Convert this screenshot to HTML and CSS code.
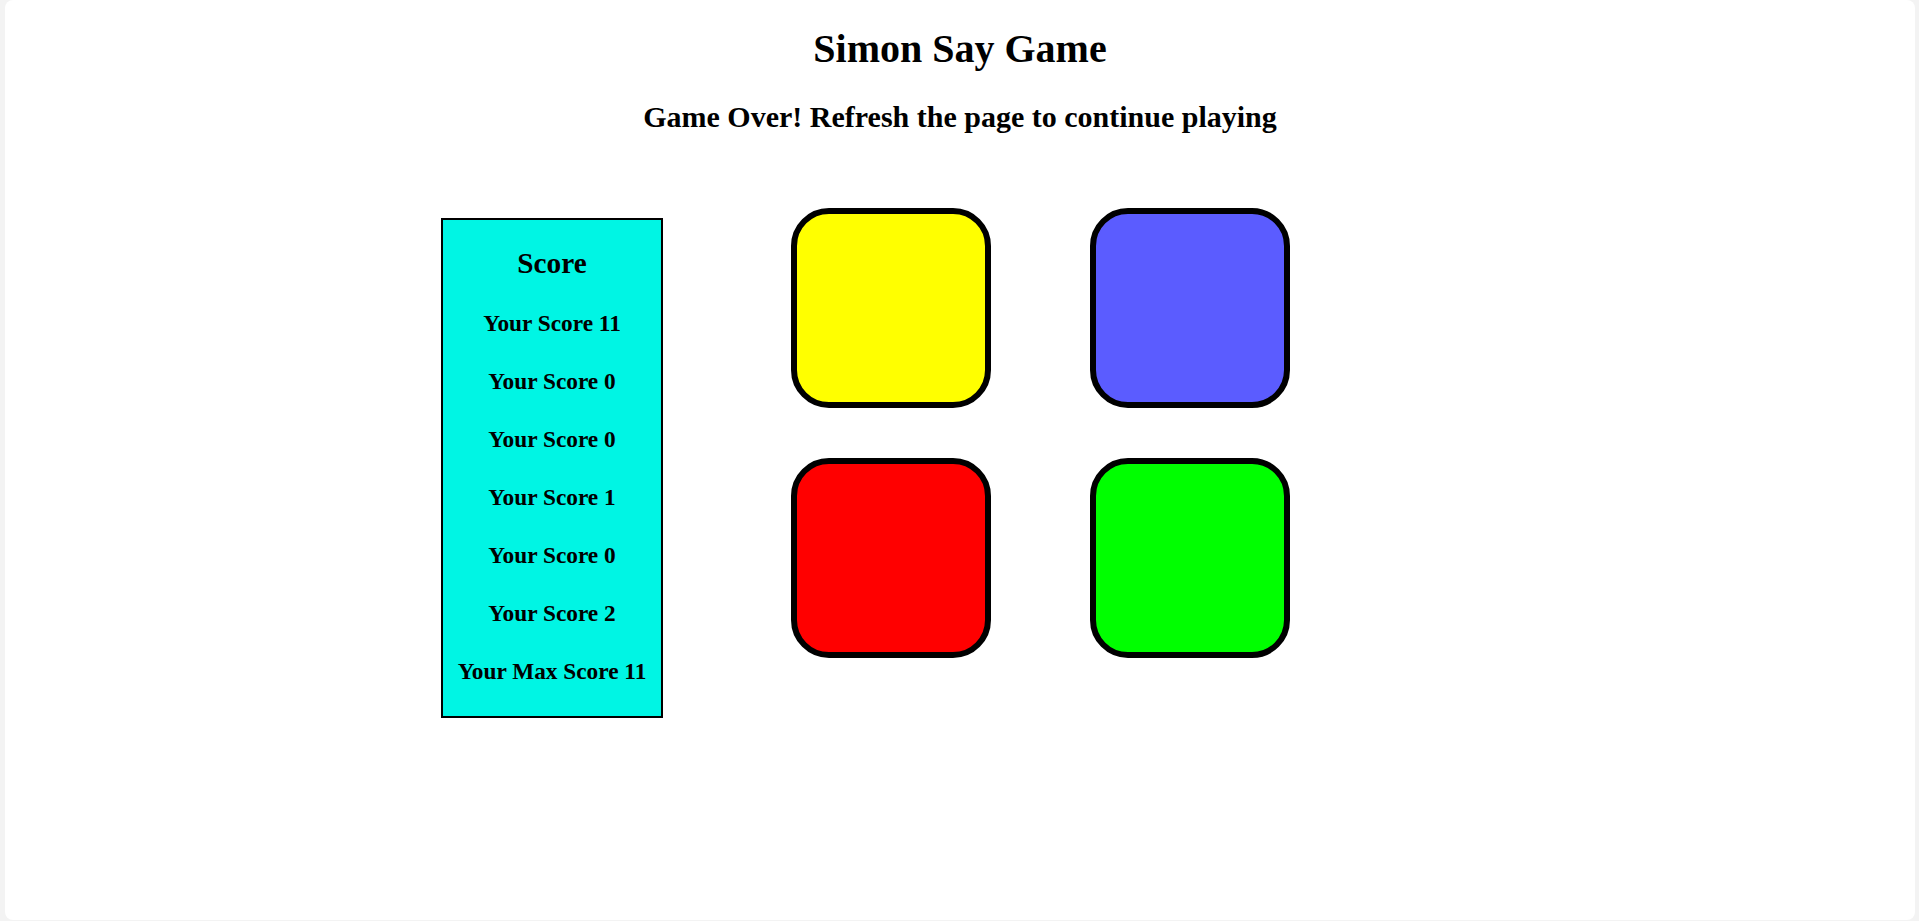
FILE: index.html
```html
<!DOCTYPE html>
<html lang="en">
<head>
<meta charset="utf-8">
<title>Simon Say Game</title>
<link rel="stylesheet" href="styles.css">
</head>
<body>
<div class="frame">
  <h1 class="title">Simon Say Game</h1>
  <h2 class="status">Game Over! Refresh the page to continue playing</h2>
  <div class="game">
    <div class="scores">
      <h2 class="scores-title">Score</h2>
      <h4 class="score-item">Your Score 11</h4>
      <h4 class="score-item">Your Score 0</h4>
      <h4 class="score-item">Your Score 0</h4>
      <h4 class="score-item">Your Score 1</h4>
      <h4 class="score-item">Your Score 0</h4>
      <h4 class="score-item">Your Score 2</h4>
      <h4 class="score-item">Your Max Score 11</h4>
    </div>
    <div class="board">
      <div class="btn yellow"></div>
      <div class="btn blue"></div>
      <div class="btn red"></div>
      <div class="btn green"></div>
    </div>
  </div>
</div>
</body>
</html>
```

FILE: styles.css
```css
html, body {
  margin: 0;
  padding: 0;
}
body {
  background: #f3f3f3;
  font-family: "Liberation Serif", "Times New Roman", serif;
  color: #000;
}
.frame {
  margin: 0 4px 0 5px;
  height: 920px;
  background: #fff;
  border-radius: 8px;
  text-align: center;
  padding-top: 26px;
  box-sizing: border-box;
  overflow: hidden;
}
.title {
  margin: 0;
  font-size: 40px;
  line-height: 46px;
  font-weight: bold;
}
.status {
  margin: 28px 0 0;
  font-size: 30px;
  line-height: 34px;
  font-weight: bold;
}
.game {
  display: flex;
  align-items: flex-start;
  margin-top: 74px;
  margin-left: 436px;
  gap: 128px;
}
.scores {
  width: 222px;
  box-sizing: border-box;
  margin-top: 10px;
  border: 2px solid #000;
  background: #00f5e4;
  padding: 26px 0 31px;
  display: flex;
  flex-direction: column;
  align-items: center;
  gap: 31px;
}
.scores-title {
  margin: 0 0 -1px;
  font-size: 29.25px;
  line-height: 34px;
  font-weight: bold;
}
.score-item {
  margin: 0;
  font-size: 23.3px;
  line-height: 27px;
  font-weight: bold;
}
.board {
  display: grid;
  grid-template-columns: 200px 200px;
  grid-auto-rows: 200px;
  column-gap: 99px;
  row-gap: 50px;
}
.btn {
  box-sizing: border-box;
  border: 6px solid #000;
  border-radius: 38px;
}
.yellow { background: #ffff00; }
.blue { background: #5b5cff; }
.red { background: #ff0000; }
.green { background: #00ff00; }
```
